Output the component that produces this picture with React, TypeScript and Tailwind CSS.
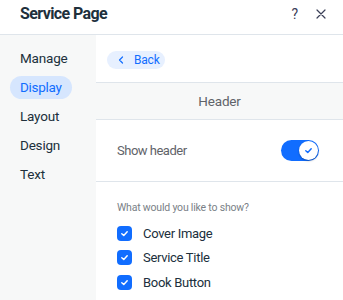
import React from "react";

const Check = ({ color = "white", size = 9 }: { color?: string; size?: number }) => (
  <svg width={size} height={size} viewBox="0 0 10 10" fill="none">
    <path d="M2 5.2 L4.2 7.2 L8 3" stroke={color} strokeWidth="1.6" strokeLinecap="round" strokeLinejoin="round" />
  </svg>
);

const CheckRow = ({ label }: { label: string }) => (
  <div className="flex items-center h-[24.5px]">
    <div className="w-[15px] h-[15px] rounded-[4px] bg-[#116dff] flex items-center justify-center">
      <Check />
    </div>
    <span className="ml-[11px] text-[13px] tracking-[-0.3px] text-[#20303c]">{label}</span>
  </div>
);

export default function App() {
  const items = ["Manage", "Display", "Layout", "Design", "Text"];
  return (
    <div
      className="w-[343px] h-[300px] bg-white flex flex-col overflow-hidden"
      style={{ fontFamily: "Roboto, 'Liberation Sans', sans-serif" }}
    >
      <div className="h-[35px] shrink-0 flex items-center justify-between pl-[20px] pr-[17px] pb-[6px] border-b border-[#dfe5eb]">
        <span className="text-[16px] font-bold text-[#20303c] tracking-[-0.6px]">Service Page</span>
        <div className="flex items-center gap-[18px] text-[#3b4057]">
          <span className="text-[14px] leading-none">?</span>
          <svg width="10" height="10" viewBox="0 0 10 10">
            <path d="M1 1 L9 9 M9 1 L1 9" stroke="#3b4057" strokeWidth="1.2" strokeLinecap="round" />
          </svg>
        </div>
      </div>
      <div className="flex flex-1">
        <div className="w-[96px] shrink-0 bg-[#f7f8f8] pt-[9px] flex flex-col">
          {items.map((it) =>
            it === "Display" ? (
              <div key={it} className="h-[29px] flex items-center">
                <div className="ml-[10px] h-[23px] px-[10px] rounded-full bg-[#d6e6fe] flex items-center text-[13.5px] tracking-[-0.3px] text-[#116dff]">
                  {it}
                </div>
              </div>
            ) : (
              <div key={it} className="h-[29px] flex items-center pl-[20px] text-[13.5px] tracking-[-0.2px] text-[#20303c]">
                {it}
              </div>
            )
          )}
        </div>
        <div className="flex-1 flex flex-col">
          <div className="h-[48px] border-b border-[#dfe5eb] pl-[11px] pt-[12px]">
            <div className="inline-flex items-center h-[18px] w-[58px] rounded-full bg-[#e7f0ff] pl-[11px] text-[12px] tracking-[-0.2px] text-[#116dff]">
              <svg width="6" height="8" viewBox="0 0 6 8" className="mr-[10px]">
                <path d="M4.5 1 L1.5 4 L4.5 7" stroke="#116dff" strokeWidth="1.2" fill="none" strokeLinecap="round" strokeLinejoin="round" />
              </svg>
              Back
            </div>
          </div>
          <div className="h-[37px] bg-[#f7f8f8] border-b border-[#dfe5eb] flex items-center justify-center text-[13.5px] tracking-[-0.2px] text-[#5f6369]">
            Header
          </div>
          <div className="h-[62px] border-b border-[#dfe5eb] flex items-center justify-between pl-[21px] pr-[24px]">
            <span className="text-[13px] tracking-[-0.5px] text-[#5f6369]">Show header</span>
            <div className="w-[38px] h-[21px] rounded-full bg-[#116dff] relative">
              <div className="absolute right-[1px] top-[1px] w-[19px] h-[19px] rounded-full bg-white shadow-[0_1px_2px_rgba(0,0,0,0.3)] flex items-center justify-center">
                <Check color="#116dff" size={9} />
              </div>
            </div>
          </div>
          <div className="pl-[21px] pt-[19px]">
            <div className="text-[10.5px] tracking-[-0.2px] text-[#7a7f87] leading-[13px] mb-[7px]">What would you like to show?</div>
            <CheckRow label="Cover Image" />
            <CheckRow label="Service Title" />
            <CheckRow label="Book Button" />
          </div>
        </div>
      </div>
    </div>
  );
}
